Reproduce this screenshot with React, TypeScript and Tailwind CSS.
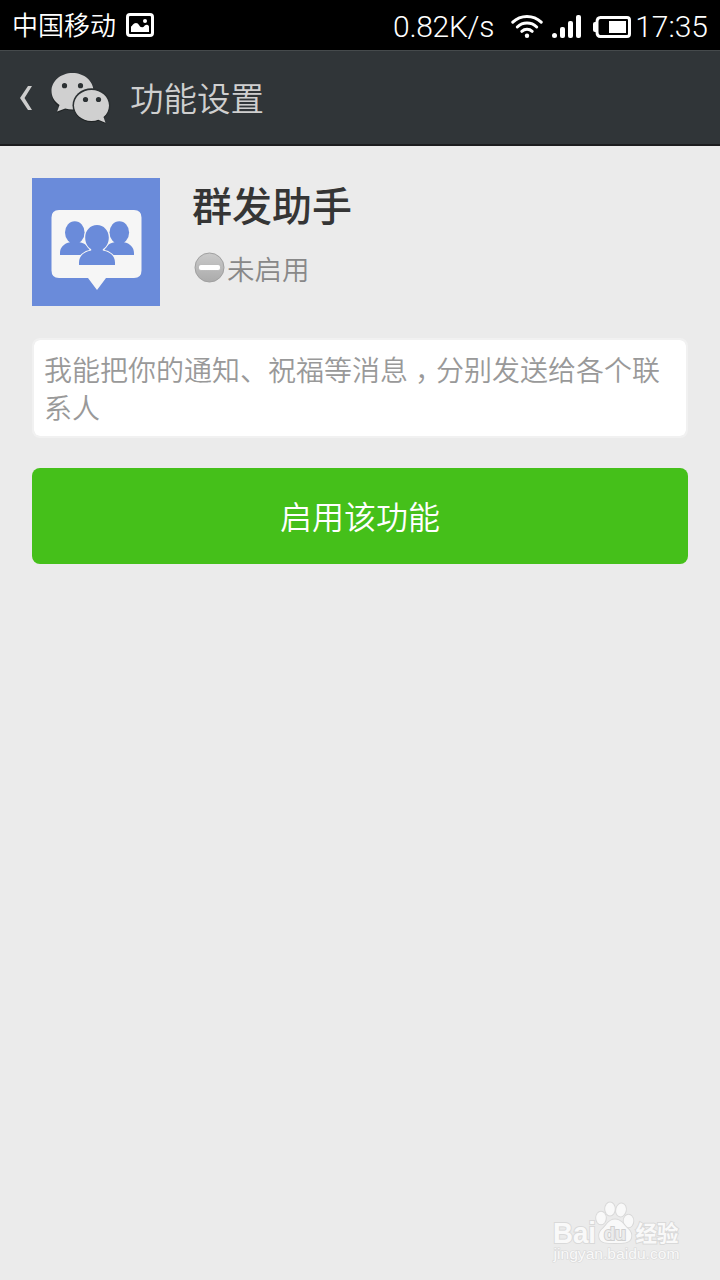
import React from "react";

function PictureIcon() {
  return (
    <svg className="w-7 h-6" viewBox="0 0 28 24" fill="none">
      <rect x="1.5" y="1.5" width="25" height="21" rx="2.5" stroke="#fff" strokeWidth="3" />
      <path d="M5 19v-5.500q1-.5 1.500-1.500 1.500-2 3.500-2t3 2q1 2.500 3.500 2.200 1.500-.2 2-1.400 1-1 2.500-1 1.500.2 2 1.700V19z" fill="#fff" />
      <circle cx="19" cy="8" r="2" fill="#fff" />
    </svg>
  );
}

function WifiIcon() {
  return (
    <svg className="w-8 h-6 mb-0.5" viewBox="0 0 32 24" fill="none" stroke="#fff" strokeWidth="3" strokeLinecap="round">
      <path d="M1.800 8.200a20.500 20.500 0 0 1 28.400 0" />
      <path d="M6.300 13a14 14 0 0 1 19.400 0" />
      <path d="M10.800 17.300a7.800 7.800 0 0 1 10.400 0" />
      <circle cx="16" cy="21.700" r="2.200" fill="#fff" stroke="none" />
    </svg>
  );
}

function SignalIcon() {
  return (
    <svg className="w-[29px] h-6" viewBox="0 0 29 24" fill="#fff">
      <rect x="0" y="18" width="5" height="5" rx="2.500" />
      <rect x="8" y="12" width="5" height="11" rx="2" />
      <rect x="16" y="6" width="5" height="17" rx="2" />
      <rect x="24" y="0" width="5" height="23" rx="2" />
    </svg>
  );
}

function BatteryIcon() {
  return (
    <svg className="w-[38px] h-[22px]" viewBox="0 0 38 22" fill="none">
      <path d="M0 8q0-2 2-2h2v10H2q-2 0-2-2z" fill="#fff" />
      <path d="M7.500 1.500H34q2.500 0 2.500 2.500v14q0 2.500-2.500 2.500H7.500Q4 20.500 4 16V6q0-4.500 3.500-4.500z" stroke="#fff" strokeWidth="3" />
      <rect x="16" y="5" width="17" height="12" fill="#fff" />
    </svg>
  );
}

function WechatLogo() {
  return (
    <svg className="w-[60px] h-[52px]" viewBox="0 0 60 52">
      <g fill="#1f2324" transform="translate(0 1)">
        <path d="M21.500 1C9.800 1 .5 9 .5 19c0 5.500 2.800 10.500 8 14l-2.300 6 8-3.600c7 2 14.800 1 19.800-2.500C39.500 30 42.500 25 42.500 19 42.500 9 33.200 1 21.500 1z" />
      </g>
      <path d="M21.500 0C9.800 0 .5 8 .5 18c0 5.500 2.800 10.500 8 14l-2.300 6.500 8-3c7 1.800 14.800 1 19.800-2.500C39.500 29 42.500 24 42.500 18 42.500 8 33.200 0 21.500 0z" fill="#d0d0d0" />
      <ellipse cx="40.500" cy="32.300" rx="19" ry="17" fill="#2b3032" />
      <path d="M40.500 18C30.800 18 23 25 23 33.500S30.800 49 40.500 49c2.500 0 4.700-.4 6.800-1.200l7.200 2.900-2-5.700c3.500-2.800 5.500-7 5.500-11.500C58 25 50.200 18 40.500 18z" fill="#1f2324" />
      <path d="M40.500 17C30.800 17 23 24 23 32.500S30.800 48 40.500 48c2.500 0 4.700-.4 6.800-1.200l7.200 2.900-2-5.700c3.500-2.800 5.500-7 5.500-11.500C58 24 50.200 17 40.500 17z" fill="#d0d0d0" />
      <g fill="#2c3133">
        <circle cx="13.500" cy="12.700" r="2.600" />
        <circle cx="29.500" cy="12.700" r="2.600" />
        <circle cx="34.500" cy="26.500" r="2.600" />
        <circle cx="47.500" cy="26.500" r="2.600" />
      </g>
    </svg>
  );
}

function GroupIcon() {
  return (
    <svg className="w-32 h-32 bg-[#6a8bda]" viewBox="0 0 128 128">
      <path d="M27 32h75q7.500 0 7.500 7.500v53q0 7.500-7.500 7.500H74L65 112 56 100H27q-7.500 0-7.500-7.500v-53Q19.500 32 27 32z" fill="#f6f6f6" />
      <g fill="#6a8bda">
        <ellipse cx="42.800" cy="54.500" rx="9.800" ry="11.300" />
        <path d="M38 61h9.500v3.300C53.500 65.300 58 69 58 75v2H28v-2c0-5.500 4-9.700 10-10.700z" />
        <ellipse cx="87.300" cy="54.500" rx="9.800" ry="11.300" />
        <path d="M82.500 61H92v3.300c6 1 10 5.200 10 10.700v2H72v-2c0-6 4.500-9.700 10.500-10.700z" />
      </g>
      <path
        d="M65 47c-6.700 0-11.800 5.500-11.800 12.500 0 5.200 2.300 9.500 6 11.700v1.300C52 73.500 47 78 47 84.500V87h36v-2.500c0-6.500-5-11-12.200-12v-1.300c3.700-2.200 6-6.500 6-11.700C76.800 52.500 71.700 47 65 47z"
        fill="#6a8bda"
        stroke="#f6f6f6"
        strokeWidth="2"
        paintOrder="stroke"
      />
    </svg>
  );
}

function DisabledIcon() {
  return (
    <svg className="w-8 h-8" viewBox="0 0 32 32">
      <defs>
        <linearGradient id="disc" x1="0" y1="0" x2="0" y2="1">
          <stop offset="0" stopColor="#cacaca" />
          <stop offset="1" stopColor="#ababab" />
        </linearGradient>
      </defs>
      <circle cx="16.500" cy="15.500" r="14.500" fill="url(#disc)" stroke="#a0a0a0" />
      <rect x="5.500" y="12.500" width="22" height="6" rx="2.500" fill="#fff" stroke="#a5a5a5" strokeWidth=".6" />
    </svg>
  );
}

function Watermark() {
  return (
    <svg
      className="w-[136px] h-[68px] font-['Liberation_Sans','Noto_Sans_CJK_SC',sans-serif]"
      viewBox="0 0 136 68"
      fill="#f9f9f9"
      stroke="#d9d9d9"
      strokeWidth="2"
      paintOrder="stroke"
    >
      <text x="3" y="43.500" fontSize="29" fontWeight="700" textLength="43" lengthAdjust="spacingAndGlyphs">Bai</text>
      <ellipse cx="51" cy="19" rx="4.800" ry="6.300" />
      <ellipse cx="60" cy="10" rx="4.800" ry="6.500" />
      <ellipse cx="71" cy="11" rx="4.800" ry="6.500" transform="rotate(12 71 11)" />
      <ellipse cx="78.500" cy="22" rx="4.800" ry="6.300" />
      <path d="M65 20.500c-6 0-7.500 4.500-11.500 8.500-4 3.500-5 6.500-4 10 1.500 5 7 5 15.500 5s14.500 0 16-5c1-3.500 0-6.500-4-10-4-4-6-8.500-12-8.500z" />
      <text x="54" y="41" fontSize="19" fontWeight="700" fill="#ececec" stroke="#cfcfcf" textLength="22" lengthAdjust="spacingAndGlyphs">du</text>
      <text x="85.500" y="41.500" fontSize="22" fontWeight="700" textLength="43" lengthAdjust="spacingAndGlyphs">经验</text>
      <text x="3.500" y="60" fontSize="14" strokeWidth="1.200" textLength="126" lengthAdjust="spacingAndGlyphs">jingyan.baidu.com</text>
    </svg>
  );
}

export default function App() {
  return (
    <div className="relative flex flex-col w-[720px] h-[1280px] overflow-hidden bg-[#ebebeb] font-['Noto_Sans_CJK_SC',sans-serif]">
      {/* Status bar */}
      <div className="flex items-center justify-between h-[50px] px-3 bg-black text-white">
        <div className="flex items-center gap-[10px]">
          <span className="pb-[2px] text-[26px] leading-none font-[350] whitespace-nowrap">中国移动</span>
          <PictureIcon />
        </div>
        <div className="flex items-center pt-1 font-['Roboto',sans-serif] font-light text-[30px] leading-none">
          <span className="mr-[17px] tracking-[-0.3px]">0.82K/s</span>
          <WifiIcon />
          <span className="ml-[9px]"><SignalIcon /></span>
          <span className="ml-3 mr-1"><BatteryIcon /></span>
          <span>17:35</span>
        </div>
      </div>

      {/* Title bar */}
      <header className="flex items-center h-24 pl-5 bg-[#303538] border-t border-t-[#454a4c] border-b-2 border-b-[#1c1c1e]">
        <svg className="w-3 h-6" viewBox="0 0 12 24">
          <path d="M8 0h4L4.500 12 12 24H8L0 12z" fill="#cdcdcd" />
        </svg>
        <span className="ml-[19px] pt-[3px]"><WechatLogo /></span>
        <h1 className="ml-[19px] pb-[2px] text-[33.500px] leading-none font-[350] text-[#cfcfcf]">功能设置</h1>
      </header>

      <main className="flex flex-col px-8 pt-8">
        <div className="flex gap-8">
          <GroupIcon />
          <div className="flex flex-col">
            <h2 className="text-[40px] leading-[52px] font-medium text-[#353535]">群发助手</h2>
            <div className="flex items-center gap-[2px] mt-[22px] ml-[1px]">
              <DisabledIcon />
              <span className="text-[27.500px] leading-8 font-[350] text-[#888888]">未启用</span>
            </div>
          </div>
        </div>

        <p className="mt-8 h-[100px] pt-[10px] pl-[10px] rounded-lg border-2 border-[#f1f1f1] bg-white bg-clip-padding text-[28px] leading-[38px] font-[350] text-[#999999]">
          我能把你的通知、祝福等消息
          {/* comma sits in the middle of its cell */}
          <span className="inline-block w-7 pl-[7px] tracking-[-7px]">，</span>
          分别发送给各个联
          <br />
          系人
        </p>

        <button className="mt-[30px] h-24 pb-[2px] rounded-lg bg-[#45c01a] text-[32px] font-[350] text-white">启用该功能</button>
      </main>

      <div className="absolute left-[550px] top-[1199px]">
        <Watermark />
      </div>
    </div>
  );
}
